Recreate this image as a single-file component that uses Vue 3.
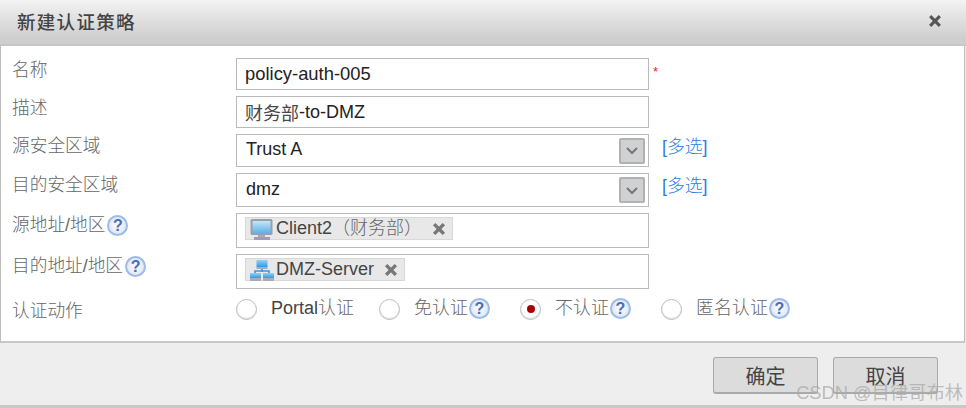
<script setup>
const closeIconPath = 'M2 2 L11 11 M11 2 L2 11'
const radios = [
  { label: 'Portal', cjk: '认证', help: false, checked: false, w: 143 },
  { label: '', cjk: '免认证', help: true, checked: false, w: 141 },
  { label: '', cjk: '不认证', help: true, checked: true, w: 141 },
  { label: '', cjk: '匿名认证', help: true, checked: false, w: 150 }
]
</script>

<template>
  <div class="dialog">
    <header class="head">
      <h1 class="title">新建认证策略</h1>
      <svg class="close" width="14" height="14" viewBox="0 0 13 13"><path :d="closeIconPath" stroke="#555" stroke-width="2.8" fill="none"/></svg>
    </header>
    <main class="body">
      <div class="row r1">
        <label class="lab">名称</label>
        <div class="box inp">policy-auth-005</div>
        <span class="star">*</span>
      </div>
      <div class="row r2">
        <label class="lab">描述</label>
        <div class="box inp"><span class="mid">财务部</span>-to-DMZ</div>
      </div>
      <div class="row r3">
        <label class="lab">源安全区域</label>
        <div class="box sel"><span class="val">Trust A</span><span class="arrow"><svg width="14" height="9" viewBox="0 0 14 9"><path d="M2 2 L7 7 L12 2" stroke="#777" stroke-width="2" fill="none"/></svg></span></div>
        <a class="multi">[多选]</a>
      </div>
      <div class="row r4">
        <label class="lab">目的安全区域</label>
        <div class="box sel"><span class="val">dmz</span><span class="arrow"><svg width="14" height="9" viewBox="0 0 14 9"><path d="M2 2 L7 7 L12 2" stroke="#777" stroke-width="2" fill="none"/></svg></span></div>
        <a class="multi">[多选]</a>
      </div>
      <div class="row r5">
        <label class="lab">源地址/地区<span class="help">?</span></label>
        <div class="box tags">
          <span class="tag">
            <svg class="ticon" width="26" height="23" viewBox="0 0 26 23">
              <defs>
                <linearGradient id="scr" x1="0" y1="0" x2="0" y2="1"><stop offset="0" stop-color="#c4e6f8"/><stop offset="1" stop-color="#5fb0ea"/></linearGradient>
              </defs>
              <rect x="1.5" y="1" width="22" height="16" rx="1.5" fill="#9a9fa8"/>
              <rect x="3.5" y="3" width="18" height="12" fill="url(#scr)"/>
              <rect x="9" y="17" width="7" height="2" fill="#a8acb4"/>
              <rect x="5" y="19" width="16" height="3" fill="#9c9cbc"/>
            </svg>
            <span class="tagtext">Client2<span class="thin">（财务部）</span></span>
            <svg class="x" width="14" height="14" viewBox="0 0 13 13"><path :d="closeIconPath" stroke="#777" stroke-width="3.2" fill="none"/></svg>
          </span>
        </div>
      </div>
      <div class="row r6">
        <label class="lab">目的地址/地区<span class="help">?</span></label>
        <div class="box tags">
          <span class="tag tag2">
            <svg class="ticon" width="26" height="23" viewBox="0 0 26 23">
              <defs>
                <linearGradient id="net" x1="0" y1="0" x2="0" y2="1"><stop offset="0" stop-color="#8fd2f6"/><stop offset="1" stop-color="#2f9be8"/></linearGradient>
              </defs>
              <path d="M13 8 V13 M6 15 V12 H20 V15" stroke="#4a90d0" stroke-width="1.6" fill="none"/>
              <rect x="7.5" y="1" width="11" height="7" fill="url(#net)"/>
              <rect x="7.5" y="8" width="11" height="2" fill="#a6adb6"/>
              <rect x="1" y="14" width="11" height="5" fill="url(#net)"/>
              <rect x="14" y="14" width="11" height="5" fill="url(#net)"/>
              <rect x="1" y="19" width="11" height="3" fill="#a6adb6"/>
              <rect x="14" y="19" width="11" height="3" fill="#a6adb6"/>
            </svg>
            <span class="tagtext">DMZ-Server</span>
            <svg class="x" width="14" height="14" viewBox="0 0 13 13"><path :d="closeIconPath" stroke="#777" stroke-width="3.2" fill="none"/></svg>
          </span>
        </div>
      </div>
      <div class="row r7">
        <label class="lab">认证动作</label>
        <div class="radios">
          <div v-for="r in radios" :key="r.cjk" class="radio" :style="{ width: r.w + 'px' }">
            <span class="dot" :class="{ on: r.checked }"></span>
            <span class="rtext">{{ r.label }}<span class="thin">{{ r.cjk }}</span></span>
            <span v-if="r.help" class="help">?</span>
          </div>
        </div>
      </div>
    </main>
    <footer class="foot">
      <button class="btn">确定</button>
      <button class="btn">取消</button>
    </footer>
    <div class="mark">CSDN @目律哥布林</div>
  </div>
</template>

<style>
html, body { margin: 0; background: #fff; overflow: hidden; }
</style>

<style scoped>
.dialog {
  position: relative;
  width: 966px;
  height: 408px;
  overflow: hidden;
  background: #eee;
  font-family: "Liberation Sans", "Noto Sans CJK SC", sans-serif;
  color: #222;
}
.head {
  height: 46px;
  box-sizing: border-box;
  padding: 0 24px 2px 17px;
  display: flex;
  align-items: center;
  justify-content: space-between;
  background: linear-gradient(#f3f3f3, #cfcfcf 85%, #cdcdcd);
  border-bottom: 2px solid #c6c6c6;
}
.title {
  margin: 0;
  font-size: 18.5px;
  font-weight: 500;
  color: #444;
  letter-spacing: 1.3px;
}
.body {
  height: 297px;
  margin-right: 1px;
  box-sizing: border-box;
  background: #fff;
  border: 1px solid #bdbdbd;
  border-top: 0;
  border-bottom: 2px solid #c8c8c8;
  padding: 12px 0 0 11px;
}
.row { display: flex; align-items: flex-start; }
.lab {
  width: 224px;
  flex: none;
  box-sizing: border-box;
  padding-top: 1px;
  font-size: 17.7px;
  line-height: 22px;
  color: #666;
  font-weight: 300;
  display: flex;
  align-items: center;
}
.lab .help { margin-left: 2px; }
.thin { color: #666; font-weight: 300; }
.mid { color: #484848; }
.box {
  width: 413px;
  flex: none;
  box-sizing: border-box;
  border: 1px solid #bbb;
  background: #fff;
  display: flex;
  align-items: center;
  padding-left: 8px;
  font-size: 18px;
  color: #222;
  white-space: pre;
}
.inp { height: 32px; margin-bottom: 6px; }
.r1 .inp { font-size: 18.4px; }
.sel {
  justify-content: space-between;
  padding-left: 9px;
  padding-right: 3px;
}
.val { margin-bottom: 2px; }
.r3 .sel { height: 33px; margin-bottom: 6px; }
.r4 .sel { height: 34px; margin-bottom: 6px; }
.tags { height: 35px; margin-bottom: 6px; padding-left: 8px; align-items: flex-start; padding-top: 3px; }
.arrow {
  width: 26px;
  height: 26px;
  box-sizing: border-box;
  background: #d0d1d3;
  border: 2px solid #b0b1b3;
  border-radius: 2px;
  display: flex;
  align-items: center;
  justify-content: center;
}
.star { color: #f02020; font-size: 13px; margin-left: 4px; padding-top: 3px; line-height: 22px; }
.multi {
  margin-left: 13px;
  font-size: 17.8px;
  line-height: 26px;
  color: #2a7de8;
  font-weight: 300;
}
.tag {
  height: 23px;
  width: 208px;
  box-sizing: border-box;
  background: #e8e8e8;
  border: 1px solid #d8d8d8;
  display: flex;
  align-items: center;
  padding-left: 3px;
  color: #444;
}
.tag2 { width: 160px; }
.ticon { flex: none; margin-top: 1px; }
.tagtext { margin-left: 1px; white-space: nowrap; font-size: 18px; line-height: 21px; color: #444; }
.x { margin-left: auto; margin-right: 6px; }
.help {
  width: 21px;
  height: 21px;
  box-sizing: border-box;
  flex: none;
  border-radius: 50%;
  background: radial-gradient(circle, #f4f6fb 25%, #d4deef 100%);
  border: 2px solid #9bbbe8;
  color: #4a6fb5;
  font: bold 16px/17px "Liberation Sans", sans-serif;
  text-align: center;
}
.r7 { padding-top: 2px; }
.r7 .lab { padding-top: 3px; }
.radios { display: flex; }
.radio { display: flex; align-items: center; height: 22px; flex: none; }
.radio .dot { margin-top: 2px; }
.radio .help { margin-left: 1px; }
.dot {
  width: 21px;
  height: 21px;
  box-sizing: border-box;
  border-radius: 50%;
  border: 1px solid #bbb;
  background: #fff;
  margin-right: 14px;
  flex: none;
  position: relative;
  box-shadow: inset 0 -1px 1px #ddd;
}
.dot.on::after {
  content: "";
  position: absolute;
  left: 5.5px;
  top: 5.5px;
  width: 8px;
  height: 8px;
  border-radius: 50%;
  background: #a80000;
}
.rtext { font-size: 18px; line-height: 22px; color: #444; white-space: nowrap; }
.rtext .thin { font-size: 18px; }
.foot {
  height: 58px;
  box-sizing: border-box;
  background: #eee;
  display: flex;
  justify-content: flex-end;
  align-items: flex-start;
  gap: 15px;
  padding: 14px 28px 0 0;
}
.btn {
  width: 105px;
  height: 37px;
  background: #dcdcdc;
  border: 1px solid #aaa;
  border-bottom-width: 2px;
  border-radius: 3px;
  font: 20px "Liberation Sans", "Noto Sans CJK SC", sans-serif;
  color: #444;
  padding: 0;
}
.mark {
  position: absolute;
  right: 3px;
  top: 378px;
  font-size: 18.3px;
  color: rgba(170, 170, 170, 0.75);
  white-space: nowrap;
}
.dialog::after {
  content: "";
  position: absolute;
  left: 0;
  right: 0;
  bottom: 0;
  height: 3px;
  background: #c8c8c8;
}
</style>
